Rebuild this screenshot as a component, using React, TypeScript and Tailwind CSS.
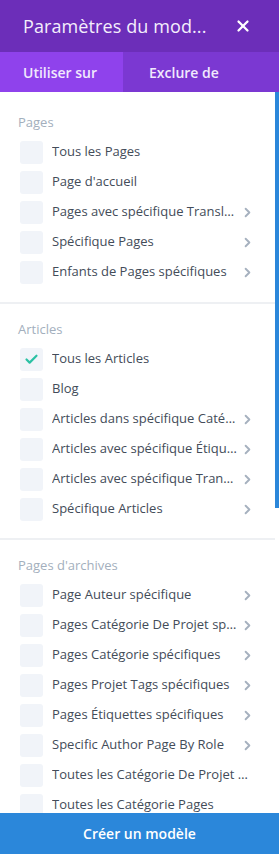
import React from 'react';
import { X, ChevronRight, Check } from 'lucide-react';

type Item = { label: string; checked?: boolean; arrow?: boolean };

const sections: { title: string; items: Item[]; pad: string }[] = [
  {
    title: 'Pages',
    pad: 'pt-[16px] pb-[15px]',
    items: [
      { label: 'Tous les Pages' },
      { label: "Page d'accueil" },
      { label: 'Pages avec spécifique Translations', arrow: true },
      { label: 'Spécifique Pages', arrow: true },
      { label: 'Enfants de Pages spécifiques', arrow: true },
    ],
  },
  {
    title: 'Articles',
    pad: 'pt-[15px] pb-[14px] border-t-2 border-[#eef0f3]',
    items: [
      { label: 'Tous les Articles', checked: true },
      { label: 'Blog' },
      { label: 'Articles dans spécifique Catégories', arrow: true },
      { label: 'Articles avec spécifique Étiquettes', arrow: true },
      { label: 'Articles avec spécifique Translations', arrow: true },
      { label: 'Spécifique Articles', arrow: true },
    ],
  },
  {
    title: "Pages d'archives",
    pad: 'pt-[15px] pb-[14px] border-t-2 border-[#eef0f3]',
    items: [
      { label: 'Page Auteur spécifique', arrow: true },
      { label: 'Pages Catégorie De Projet spécifiques', arrow: true },
      { label: 'Pages Catégorie spécifiques', arrow: true },
      { label: 'Pages Projet Tags spécifiques', arrow: true },
      { label: 'Pages Étiquettes spécifiques', arrow: true },
      { label: 'Specific Author Page By Role', arrow: true },
      { label: 'Toutes les Catégorie De Projet Pages' },
      { label: 'Toutes les Catégorie Pages' },
    ],
  },
];

const App: React.FC = () => {
  return (
    <div
      className="w-[279px] h-[854px] flex flex-col bg-white overflow-hidden"
      style={{ fontFamily: '"Open Sans", "Noto Sans", sans-serif' }}
    >
      {/* Header */}
      <div className="h-[52px] shrink-0 bg-[#6c2eb9] flex items-center justify-between pl-[23px] pr-[27px]">
        <span className="text-[18px] font-medium text-[#f4effc] tracking-[0.1px]">Paramètres du mod...</span>
        <X className="w-[18px] h-[18px] text-white" strokeWidth={3} />
      </div>

      {/* Tabs */}
      <div className="h-[40px] shrink-0 flex bg-[#7b38d2]">
        <div className="w-[123px] bg-[#8f42ec] flex items-center pl-[23px] text-[14px] font-semibold text-[#f1e9fd]">
          Utiliser sur
        </div>
        <div className="flex-1 flex items-center pl-[26px] text-[14px] font-semibold text-[#f1e9fd]">
          Exclure de
        </div>
      </div>

      {/* Scroll area */}
      <div className="flex-1 min-h-0 flex overflow-hidden">
        <div className="flex-1 min-w-0 pt-[4px]">
          {sections.map((section, si) => (
            <div key={si} className={`pl-[18px] pr-[20px] ${section.pad}`}>
              <div className="h-[20px] leading-[20px] text-[13px] text-[#a3afbd] mb-[5px]">{section.title}</div>
              {section.items.map((item, ii) => (
                <div key={ii} className="h-[30px] flex items-center">
                  <div className="w-[23px] h-[23px] ml-[2px] rounded-[3px] bg-[#f1f4f9] flex items-center justify-center shrink-0">
                    {item.checked && <Check className="w-[15px] h-[15px] text-[#2bc1a4]" strokeWidth={3.5} />}
                  </div>
                  <span className="ml-[9px] flex-1 min-w-0 truncate text-[13px] font-medium text-[#434c59]">
                    {item.label}
                  </span>
                  {item.arrow && (
                    <ChevronRight className="w-[15px] h-[15px] ml-[2px] text-[#a6b1bf] shrink-0" strokeWidth={3} />
                  )}
                </div>
              ))}
            </div>
          ))}
        </div>
        <div className="w-[4px] shrink-0">
          <div className="h-[416px] bg-[#2b87da]" />
        </div>
      </div>

      {/* Footer button */}
      <button className="h-[41px] shrink-0 bg-[#2b87da] text-white text-[14px] font-semibold">
        Créer un modèle
      </button>
    </div>
  );
};

export default App;
